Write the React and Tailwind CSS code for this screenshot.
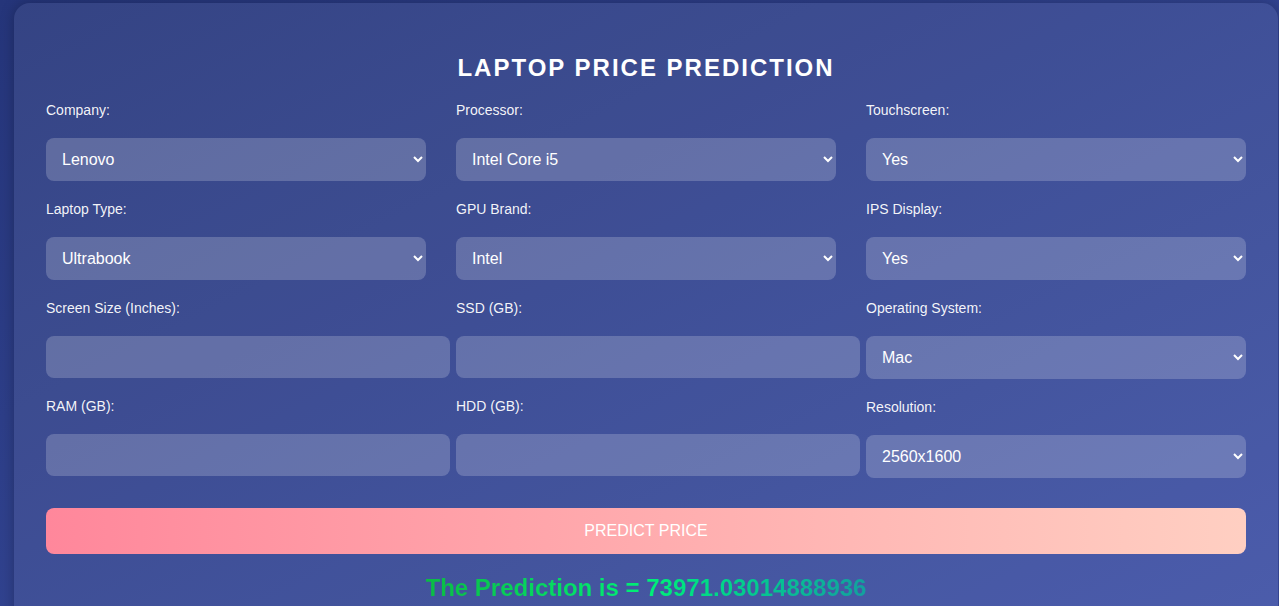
import React from 'react'

const selectCls =
  'w-full h-[43px] rounded-lg bg-white/20 pl-3 pr-1 text-base text-white outline-none border-0'
const inputCls =
  'w-[calc(100%+24px)] h-[42px] rounded-lg bg-white/20 px-3 text-base text-white outline-none border-0'

const Field = ({ label, options, value }) => (
  <div className="flex flex-col">
    <label className="text-sm leading-4 text-white/95 mb-5">{label}</label>
    {options ? (
      <select className={`${selectCls} mb-5`} defaultValue={value}>
        {options.map((o) => (
          <option key={o} value={o} className="text-black">
            {o}
          </option>
        ))}
      </select>
    ) : (
      <input type="text" className={`${inputCls} mb-5`} />
    )}
  </div>
)

const columns = [
  [
    { label: 'Company:', options: ['Lenovo', 'Apple', 'HP', 'Dell', 'Asus', 'Acer'], value: 'Lenovo' },
    { label: 'Laptop Type:', options: ['Ultrabook', 'Notebook', 'Gaming', '2 in 1 Convertible'], value: 'Ultrabook' },
    { label: 'Screen Size (Inches):' },
    { label: 'RAM (GB):' },
  ],
  [
    { label: 'Processor:', options: ['Intel Core i5', 'Intel Core i7', 'Intel Core i3', 'AMD Processor'], value: 'Intel Core i5' },
    { label: 'GPU Brand:', options: ['Intel', 'Nvidia', 'AMD'], value: 'Intel' },
    { label: 'SSD (GB):' },
    { label: 'HDD (GB):' },
  ],
  [
    { label: 'Touchscreen:', options: ['Yes', 'No'], value: 'Yes' },
    { label: 'IPS Display:', options: ['Yes', 'No'], value: 'Yes' },
    { label: 'Operating System:', options: ['Mac', 'Windows', 'Linux/Others'], value: 'Mac' },
    { label: 'Resolution:', options: ['1920x1080', '1366x768', '2560x1600', '3840x2160'], value: '2560x1600' },
  ],
]

export default function App() {
  return (
    <div
      className="min-h-screen overflow-hidden bg-gradient-to-br from-[#25357a] to-[#3e51a6] pt-[3px]"
      style={{ fontFamily: '"Liberation Sans", Arial, sans-serif' }}
    >
      <div className="ml-[14px] w-[1264px] rounded-2xl bg-white/[0.07] shadow-[0_0_14px_rgba(0,0,0,0.25)] px-8 pt-[51px] pb-10">
        <h1 className="text-center text-2xl leading-7 font-bold tracking-[2px] text-white mb-5">
          LAPTOP PRICE PREDICTION
        </h1>

        <div className="grid grid-cols-3 gap-x-[30px]">
          {columns.map((col, i) => (
            <div key={i} className="flex flex-col">
              {col.map((f) => (
                <Field key={f.label} {...f} />
              ))}
            </div>
          ))}
        </div>

        <button
          type="button"
          className="mt-[10px] w-full h-[46px] rounded-lg bg-gradient-to-r from-[#ff879b] to-[#ffcfc2] text-base text-white"
        >
          PREDICT PRICE
        </button>

        <p className="mt-[20px] text-center text-2xl leading-7 font-bold">
          <span className="bg-gradient-to-r from-[#0bbb44] via-[#00f077] to-[#13a09e] bg-clip-text text-transparent">
            The Prediction is = 73971.03014888936
          </span>
        </p>
      </div>
    </div>
  )
}
